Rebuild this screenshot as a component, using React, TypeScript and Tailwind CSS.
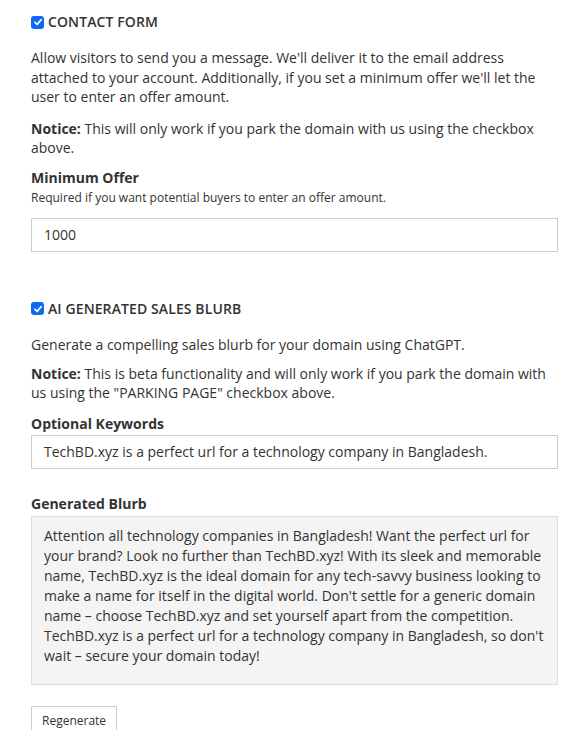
import React from "react";

function Check() {
  return (
    <span className="inline-flex h-[13px] w-[13px] shrink-0 items-center justify-center rounded-[3px] bg-[#0b6bf5]">
      <svg viewBox="0 0 12 12" className="h-[10px] w-[10px]">
        <path d="M2.2 6.3 L4.9 8.9 L9.9 3.2" fill="none" stroke="white" strokeWidth="2" strokeLinecap="round" strokeLinejoin="round" />
      </svg>
    </span>
  );
}

export default function App() {
  const font = { fontFamily: '"Open Sans", "Liberation Sans", sans-serif' };
  return (
    <div style={font} className="min-h-[730px] bg-white pl-[31px] pr-[22px] pt-[12px] text-[14px] leading-[19.6px] text-[#333]">
      <div className="flex h-[20px] items-center gap-[4px]">
        <Check />
        <span className="text-[14px] font-semibold tracking-[0.1px]">CONTACT FORM</span>
      </div>
      <p className="mt-[16px]">
        Allow visitors to send you a message. We'll deliver it to the email address attached to your account. Additionally, if you set a minimum offer we'll let the user to enter an offer amount.
      </p>
      <p className="mt-[12px]">
        <b className="font-bold">Notice:</b> This will only work if you park the domain with us using the checkbox above.
      </p>
      <div className="mt-[10px] font-bold leading-[20px]">Minimum Offer</div>
      <div className="mt-[2px] text-[12px] leading-[16px]">Required if you want potential buyers to enter an offer amount.</div>
      <div className="mt-[12px] flex h-[34px] items-center border border-[#ccc] px-[12px]">1000</div>

      <div className="mt-[47px] flex h-[20px] items-center gap-[4px]">
        <Check />
        <span className="text-[14px] font-semibold tracking-[0.1px]">AI GENERATED SALES BLURB</span>
      </div>
      <p className="mt-[16px]">Generate a compelling sales blurb for your domain using ChatGPT.</p>
      <p className="mt-[9px]">
        <b className="font-bold">Notice:</b> This is beta functionality and will only work if you park the domain with us using the "PARKING PAGE" checkbox above.
      </p>
      <div className="mt-[11px] font-bold leading-[20px]">Optional Keywords</div>
      <div className="mt-[1px] flex h-[34px] items-center border border-[#ccc] px-[12px]">
        TechBD.xyz is a perfect url for a technology company in Bangladesh.
      </div>
      <div className="mt-[25px] font-bold leading-[20px]">Generated Blurb</div>
      <div className="mt-[2px] h-[169px] border border-[#ddd] bg-[#f4f4f4] px-[12px] pt-[9px] leading-[20px]">
        Attention all technology companies in Bangladesh! Want the perfect url for your brand? Look no further than TechBD.xyz! With its sleek and memorable name, TechBD.xyz is the ideal domain for any tech-savvy business looking to make a name for itself in the digital world. Don't settle for a generic domain name – choose TechBD.xyz and set yourself apart from the competition. TechBD.xyz is a perfect url for a technology company in Bangladesh, so don't wait – secure your domain today!
      </div>
      <button className="mt-[21px] h-[30px] border border-[#ccc] bg-white px-[10px] text-[12px] leading-[18px] text-[#333]">Regenerate</button>
    </div>
  );
}
